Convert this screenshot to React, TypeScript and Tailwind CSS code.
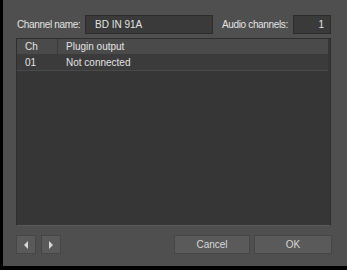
export default function App() {
  const font = { fontFamily: '"Liberation Sans", Arial, sans-serif' };
  return (
    <div className="w-[347px] h-[270px] bg-black flex" style={font}>
      <div className="ml-[3px] mb-[4px] flex-1 bg-[#4f4f4f] flex flex-col text-[10px] text-[#e2e2e2]">
        {/* top fields */}
        <div className="flex items-center h-[19px] mt-[15px] pl-[14px] whitespace-nowrap">
          <span className="w-[68px] shrink-0 tracking-[-0.35px]">Channel name:</span>
          <div className="w-[128px] shrink-0 h-[19px] bg-[#3a3a3a] border border-[#2c2c2c] flex items-center pl-[9px]">
            BD IN 91A
          </div>
          <span className="ml-[9px] w-[71px] shrink-0 tracking-[-0.35px]">Audio channels:</span>
          <div className="w-[38px] shrink-0 h-[19px] bg-[#3a3a3a] border border-[#2c2c2c] flex items-center justify-end pr-[6px]">
            1
          </div>
        </div>

        {/* table */}
        <div className="ml-[13px] mt-[4px] w-[315px] h-[188px] bg-[#363636] border border-[#2e2e2e] border-b-[#5a5a5a] flex flex-col">
          <div className="flex h-[15px] mr-[2px] bg-[#4a4a4a] items-center">
            <span className="w-[41px] pl-[8px] border-r border-[#3a3a3a]">Ch</span>
            <span className="pl-[8px]">Plugin output</span>
          </div>
          <div className="flex h-[17px] mr-[2px] bg-[#3b3b3b] items-center border-b border-[#4a4a4a]">
            <span className="w-[41px] pl-[8px]">01</span>
            <span className="pl-[8px]">Not connected</span>
          </div>
        </div>

        {/* bottom buttons */}
        <div className="flex items-center mt-[9px] pl-[13px] h-[19px]">
          <button className="w-[20px] h-[19px] bg-[#5a5a5a] border border-[#464646] flex items-center justify-center">
            <svg width="6" height="8" viewBox="0 0 6 8"><path d="M5 0 L1 4 L5 8 Z" fill="#d8d8d8" /></svg>
          </button>
          <button className="ml-[5px] w-[20px] h-[19px] bg-[#5a5a5a] border border-[#464646] flex items-center justify-center">
            <svg width="6" height="8" viewBox="0 0 6 8"><path d="M1 0 L5 4 L1 8 Z" fill="#d8d8d8" /></svg>
          </button>
          <button className="ml-[113px] w-[76px] h-[19px] bg-[#5a5a5a] border border-[#464646] text-[#d8d8d8]">
            Cancel
          </button>
          <button className="ml-[4px] w-[78px] h-[19px] bg-[#5a5a5a] border border-[#464646] text-[#d8d8d8]">
            OK
          </button>
        </div>
      </div>
    </div>
  );
}
